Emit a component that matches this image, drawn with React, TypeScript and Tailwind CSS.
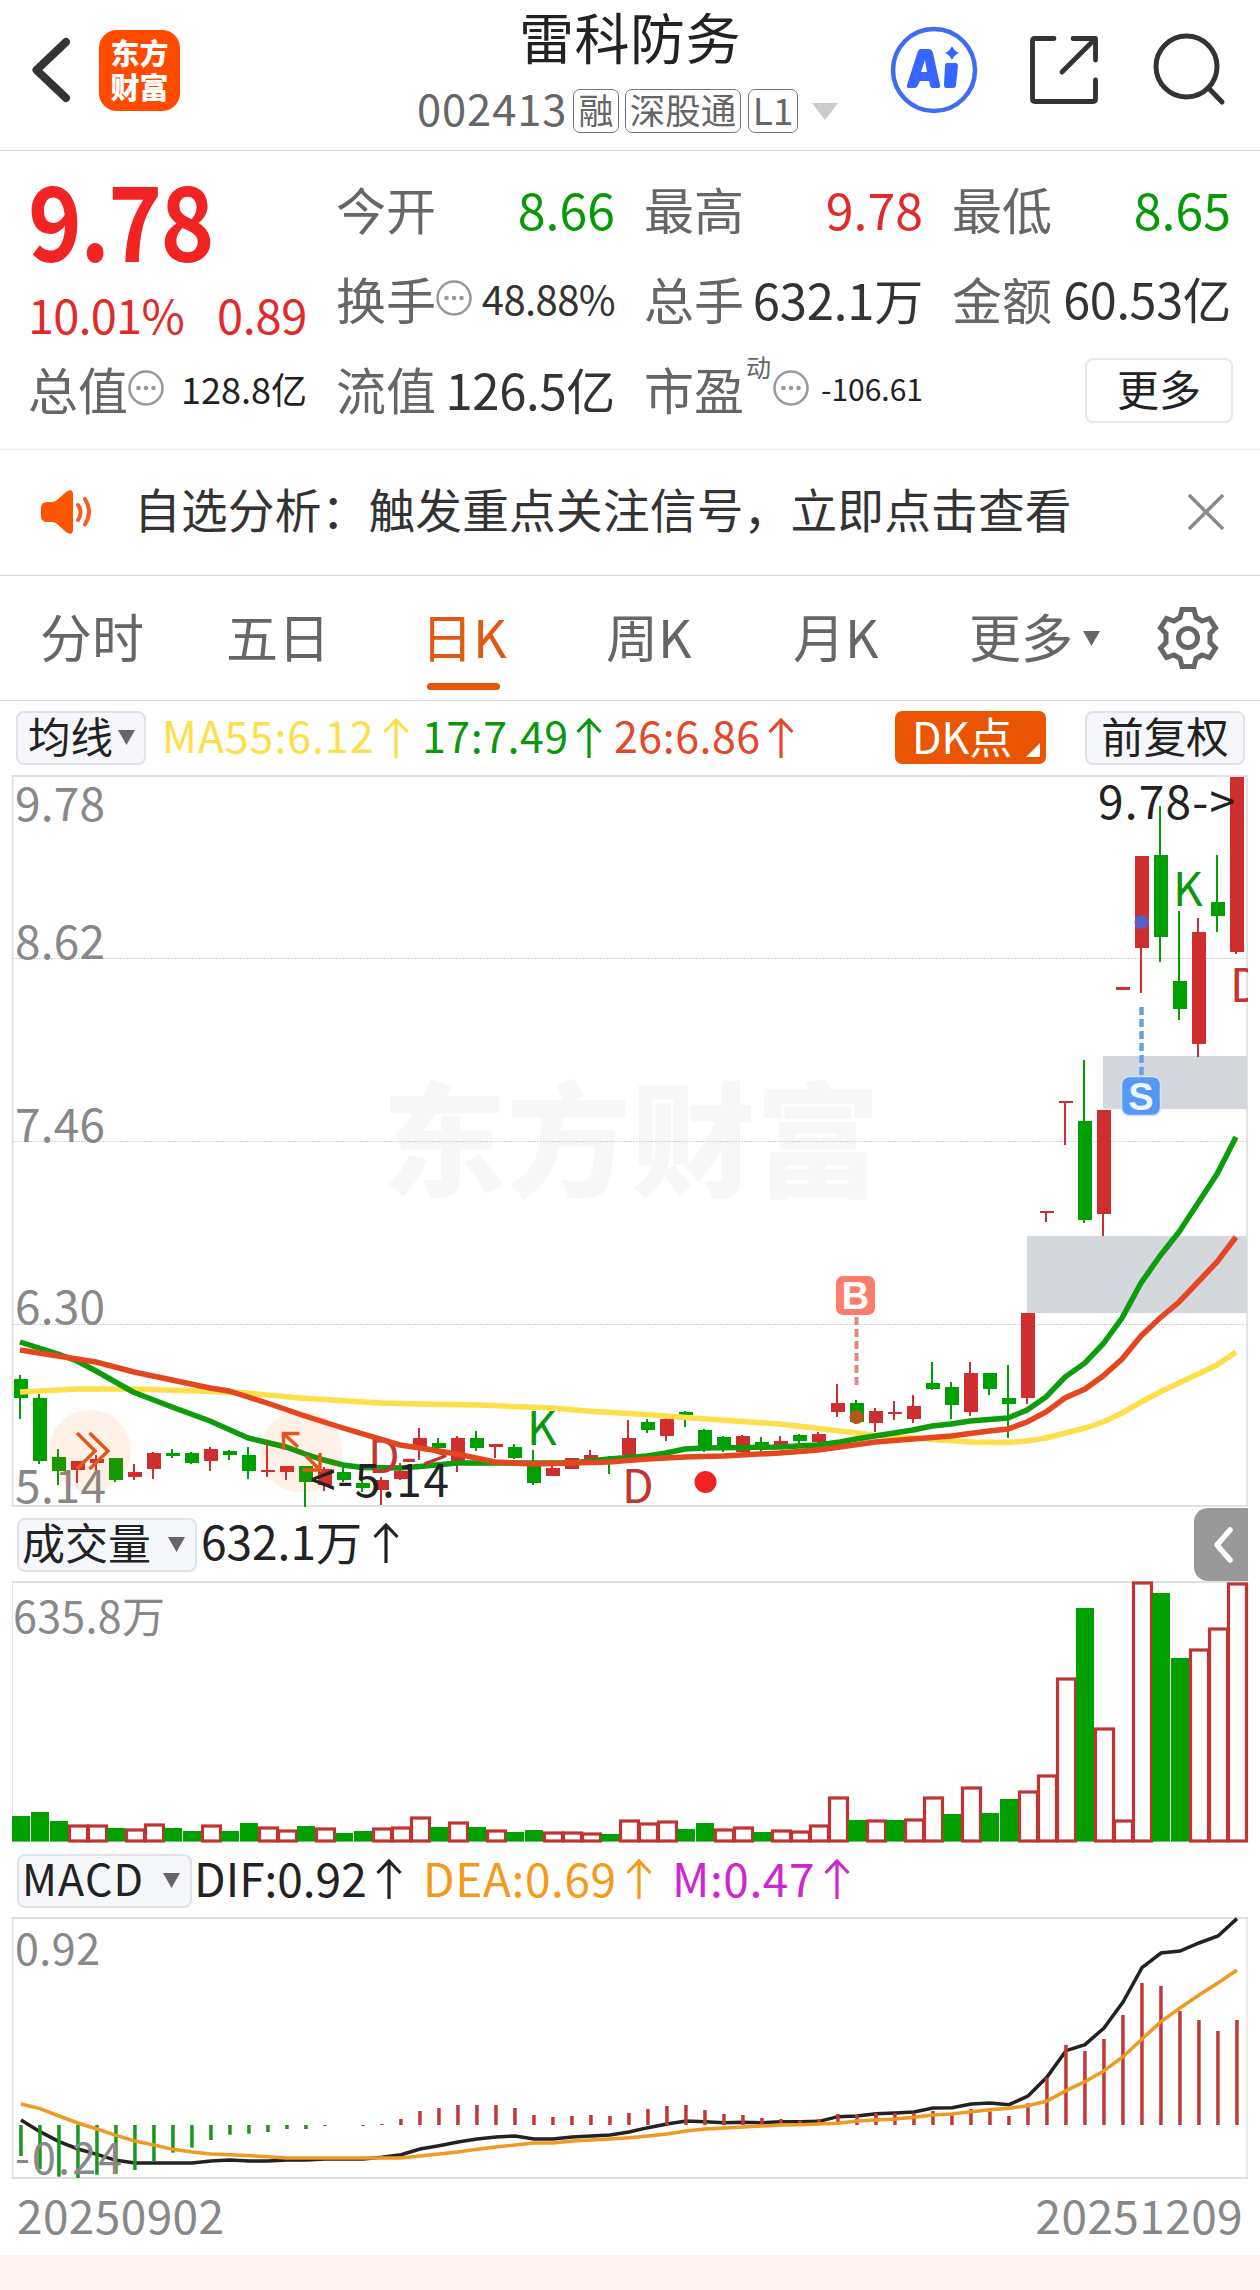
import React from "react";

const FONT = "font-['Noto_Sans_CJK_SC','Noto_Sans',sans-serif]";
const GREEN = "#00a000";
const RED = "#cf2e2e";

type Candle = [string, number, number, number, number];

// direction, wick top, body top, body bottom, wick bottom
const candles: Candle[] = [
  ["g", 1375, 1379, 1398, 1419], ["g", 1394, 1398, 1461, 1464], ["g", 1449, 1457, 1471, 1485],
  ["r", 1461, 1461, 1470, 1483], ["r", 1455, 1459, 1463, 1471], ["g", 1458, 1458, 1480, 1482],
  ["r", 1464, 1472, 1477, 1480], ["r", 1452, 1453, 1469, 1479], ["g", 1449, 1453, 1456, 1458],
  ["g", 1452, 1453, 1463, 1464], ["r", 1447, 1449, 1461, 1471], ["g", 1450, 1451, 1455, 1460],
  ["g", 1447, 1455, 1471, 1479], ["r", 1445, 1470, 1472, 1477], ["r", 1466, 1466, 1472, 1480],
  ["g", 1466, 1466, 1482, 1507], ["r", 1467, 1469, 1485, 1491], ["g", 1467, 1472, 1480, 1482],
  ["g", 1470, 1483, 1488, 1492], ["r", 1477, 1480, 1490, 1505], ["r", 1463, 1471, 1479, 1480],
  ["r", 1428, 1438, 1447, 1460], ["g", 1438, 1443, 1448, 1449], ["r", 1436, 1438, 1461, 1472],
  ["g", 1431, 1438, 1448, 1451], ["r", 1444, 1444, 1447, 1458], ["g", 1444, 1447, 1458, 1459],
  ["g", 1450, 1462, 1483, 1485], ["r", 1460, 1468, 1476, 1476], ["r", 1458, 1458, 1469, 1469],
  ["r", 1450, 1455, 1462, 1462], ["g", 1456, 1458, 1460, 1474], ["r", 1420, 1438, 1455, 1455],
  ["g", 1419, 1422, 1430, 1433], ["r", 1418, 1419, 1436, 1441], ["g", 1411, 1412, 1415, 1427],
  ["g", 1429, 1430, 1448, 1452], ["g", 1436, 1437, 1448, 1452], ["r", 1435, 1436, 1452, 1453],
  ["g", 1437, 1442, 1448, 1452], ["r", 1436, 1441, 1447, 1447], ["g", 1434, 1435, 1441, 1446],
  ["r", 1432, 1434, 1442, 1443], ["r", 1384, 1403, 1412, 1417], ["g", 1400, 1403, 1422, 1424],
  ["r", 1408, 1411, 1423, 1432], ["r", 1401, 1412, 1414, 1420], ["r", 1395, 1406, 1419, 1423],
  ["g", 1362, 1383, 1389, 1390], ["g", 1382, 1387, 1405, 1419], ["r", 1362, 1373, 1412, 1416],
  ["g", 1373, 1373, 1389, 1395], ["g", 1365, 1398, 1404, 1438], ["r", 1313, 1313, 1398, 1404],
  ["r", 1211, 1211, 1213, 1222], ["r", 1101, 1101, 1103, 1145], ["g", 1060, 1121, 1220, 1223],
  ["r", 1110, 1110, 1214, 1236], ["r", 987, 987, 990, 990], ["r", 856, 856, 948, 993],
  ["g", 806, 855, 937, 962], ["g", 911, 981, 1009, 1020], ["r", 918, 932, 1044, 1057],
  ["g", 855, 902, 916, 932], ["r", 777, 777, 952, 954],
];

const volumeTops = [
  1816, 1812, 1821, 1826, 1826, 1828, 1830, 1825, 1828, 1831, 1826, 1831, 1823, 1828, 1831, 1826, 1829,
  1833, 1831, 1829, 1828, 1818, 1827, 1823, 1827, 1831, 1832, 1830, 1833, 1833, 1834, 1834, 1821, 1824,
  1822, 1829, 1823, 1830, 1828, 1832, 1831, 1832, 1826, 1798, 1820, 1821, 1820, 1820, 1798, 1814, 1788,
  1813, 1799, 1792, 1776, 1679, 1608, 1729, 1821, 1583, 1593, 1658, 1650, 1629, 1584,
];

// days whose volume colour follows the previous close rather than the candle body
const volumeColour: Record<number, string> = { 33: "r", 37: "r", 41: "r", 46: "g", 48: "r", 63: "r" };

// MACD series, in thirds of a pixel from y = 1840
const macdBars = [
  948, 987, 1010, 1014, 1004, 1001, 990, 965, 938, 923, 900, 884, 881, 876, 867, 867, 858, 855, 858, 852, 837,
  813, 804, 795, 795, 795, 804, 825, 831, 828, 825, 828, 819, 807, 798, 795, 810, 822, 825, 834, 837, 842, 837,
  822, 825, 819, 819, 820, 813, 820, 807, 814, 828, 790, 713, 615, 633, 597, 525, 429, 438, 513, 540, 573, 540,
];
const dif = [
  840, 875, 905, 927, 943, 961, 969, 969, 969, 969, 963, 960, 963, 963, 960, 960, 957, 957, 957, 952, 944, 927,
  917, 906, 897, 891, 888, 897, 897, 891, 888, 885, 876, 863, 852, 843, 845, 848, 847, 848, 845, 845, 844, 830,
  828, 821, 819, 816, 804, 803, 792, 789, 794, 768, 711, 632, 614, 564, 486, 383, 339, 333, 309, 288, 236,
];
const dea = [
  792, 806, 828, 849, 867, 886, 903, 915, 928, 936, 942, 944, 947, 950, 954, 954, 954, 954, 954, 954, 954, 948,
  942, 936, 928, 921, 915, 909, 909, 903, 900, 897, 893, 888, 882, 873, 867, 864, 861, 858, 855, 854, 852, 850,
  843, 840, 837, 832, 825, 822, 815, 809, 805, 797, 783, 752, 725, 692, 650, 597, 545, 504, 465, 429, 390,
];

const MA55 =
  "20,1392 77,1389 133,1389 200,1391 247,1393 300,1398 380,1403 420,1404 480,1405 553,1408 587,1411 653,1415 720,1420 780,1424 840,1431 873,1435 940,1440 973,1442 1007,1442.5 1027,1441 1046,1438 1065,1433 1085,1428 1103,1422 1122,1413 1141,1402 1160,1392 1198,1374 1217,1365 1236,1352";
const MA17 =
  "20,1342 58,1354 77,1361 96,1371 133,1392 172,1407 210,1421 248,1438 286,1447 305,1454 324,1460 343,1465 362,1467.5 400,1468 420,1466.5 457,1463 495,1463 533,1463 571,1463 609,1459 647,1456 666,1453 685,1449 704,1448 780,1447 818,1445 840,1442 856,1439 875,1436 913,1430 932,1426 951,1424 970,1421 1008,1418 1027,1410 1046,1397 1065,1377 1085,1363 1103,1344 1122,1318 1141,1283 1160,1256 1179,1232 1198,1203 1217,1174 1236,1137";
const MA26 =
  "20,1350 96,1362 134,1372 172,1380 210,1388 229,1391 248,1397 267,1403 305,1416 343,1428 400,1445 420,1448 457,1454 495,1462 533,1464 571,1463 609,1462 647,1459 685,1457 723,1456 780,1453 818,1450 840,1447 875,1442 913,1439 951,1436 989,1431 1008,1429 1027,1422 1046,1412 1065,1398 1085,1389 1103,1376 1122,1359 1141,1336 1160,1318 1179,1302 1198,1282 1217,1262 1236,1237";

function UpArrow({ className = "" }: { className?: string }) {
  return (
    <svg className={`shrink-0 ${className}`} width="26" height="40" viewBox="0 0 26 40" fill="none" stroke="currentColor" strokeWidth="3.200">
      <path d="M13 40V2M1.500 14 13 2l11.500 12" />
    </svg>
  );
}

function Caret({ className = "" }: { className?: string }) {
  return (
    <svg className={`shrink-0 ${className}`} width="17" height="15" viewBox="0 0 17 15" fill="currentColor">
      <path d="M0 0h17L8.500 15z" />
    </svg>
  );
}

function InfoDots() {
  return (
    <svg className="-ml-[2px] shrink-0" width="36" height="36" viewBox="0 0 36 36">
      <circle cx="18" cy="18" r="16.500" fill="none" stroke="#999" strokeWidth="2.500" />
      <circle cx="10.500" cy="18" r="2.300" fill="#999" />
      <circle cx="18" cy="18" r="2.300" fill="#999" />
      <circle cx="25.500" cy="18" r="2.300" fill="#999" />
    </svg>
  );
}

function Label({ children }: { children: React.ReactNode }) {
  return <span className="-ml-[2px] w-[102px] shrink-0 text-[50px] text-[#666]">{children}</span>;
}

function Row({ children }: { children: React.ReactNode }) {
  return <div className="-mr-[1px] flex h-[90px] items-center whitespace-nowrap leading-none">{children}</div>;
}

function Header() {
  return (
    <header className="flex h-[151px] border-b border-[#d5d5d5] leading-none">
      <svg className="ml-[28px] mt-[34px] shrink-0" width="46" height="72" viewBox="0 0 46 72" fill="none" stroke="#333" strokeWidth="8" strokeLinecap="round" strokeLinejoin="round">
        <path d="M38 8 8.500 36 38 64" />
      </svg>
      <div className="ml-[25px] mt-[30px] flex h-[81px] w-[81px] shrink-0 flex-col items-center rounded-[18px] bg-[#ff4a00] pt-[5px] text-[29px] font-black leading-[34px] text-white">
        <span>东方</span>
        <span>财富</span>
      </div>
      <div className="ml-[204px] flex w-[494px] shrink-0 flex-col">
        <h1 className="ml-[135px] mt-[7px] text-[55px] leading-[56px] tracking-[0.500px] text-[#222]">雷科防务</h1>
        <div className="ml-[33px] mt-[26px] flex h-[44px] items-center whitespace-nowrap text-[#666]">
          <span className="-mt-[6px] w-[156px] text-[43.500px] tracking-[0.900px]">002413</span>
          <span className="flex h-[44px] w-[46px] justify-center rounded-[7px] border border-[#777] text-[35px] leading-[38px]">融</span>
          <span className="ml-[6px] flex h-[44px] w-[116px] justify-center rounded-[7px] border border-[#777] text-[35.500px] leading-[38px]">深股通</span>
          <span className="ml-[7px] flex h-[44px] w-[50px] justify-center rounded-[7px] border border-[#777] text-[37px] leading-[38px]">L1</span>
          <svg className="ml-[14px]" width="26" height="17" viewBox="0 0 26 17" fill="#ccc">
            <path d="M0 0h26L13 17z" />
          </svg>
        </div>
      </div>
      <svg className="ml-[12px] mt-[26px] shrink-0" width="88" height="88" viewBox="0 0 88 88">
        <circle cx="44" cy="44" r="41" fill="none" stroke="#3f6cf0" strokeWidth="4.500" />
        <path
          d="M31 23h7q4 0 5 4l7 32q1 3-2 3h-5q-3 0-3-3l-1-4h-9l-2 4q-1 3-4 3h-5q-3 0-2-3l10-31q1-5 4-5zM35 34l-4 12h6z"
          fill="#3765ff"
          fillRule="evenodd"
        />
        <path d="M57 37h8q3 0 3 3l-2 19q0 3-3 3h-7q-2 0-2-3l1-19q0-3 2-3zM62 20q2 5 7 7-5 2-7 7-2-5-7-7 5-2 7-7z" fill="#3765ff" />
      </svg>
      <svg className="ml-[50px] mt-[34px] shrink-0" width="72" height="72" viewBox="0 0 72 72" fill="none" stroke="#333" strokeWidth="4.800" strokeLinecap="round" strokeLinejoin="round">
        <path d="M26 4.500H7q-2.500 0-2.500 2.500v58q0 2.500 2.500 2.500h58q2.500 0 2.500-2.500V46M45 4.500h22.500V26M66 6 34 38" />
      </svg>
      <svg className="ml-[50px] mt-[30px] shrink-0" width="76" height="78" viewBox="0 0 76 78" fill="none" stroke="#333" strokeWidth="5" strokeLinecap="round">
        <circle cx="36.500" cy="36.500" r="30.500" />
        <path d="M58.500 58 72 72" />
      </svg>
    </header>
  );
}

function Quote() {
  return (
    <section className="grid h-[299px] grid-cols-4 gap-x-8 border-b border-[#eee] px-[30px] pt-[12px]">
      <div>
        <div className="flex h-[120px] items-center pb-[12px] text-[104px] font-bold leading-[108px] text-[#f12323]">
          <span className="-ml-[2px] origin-left scale-x-[0.88] tracking-[-2px]">9.78</span>
        </div>
        <div className="-mr-[1px] flex h-[60px] items-center justify-between whitespace-nowrap text-[47px] leading-none text-[#e02b2b]">
          <span className="-ml-[2px] tracking-[-0.800px]">10.01%</span>
          <span className="tracking-[-0.300px]">0.89</span>
        </div>
        <Row>
          <Label>总值</Label>
          <InfoDots />
          <span className="ml-auto text-[36px] text-[#222]">128.8亿</span>
        </Row>
      </div>
      <div>
        <Row>
          <Label>今开</Label>
          <span className="ml-auto text-[50px] text-[#069a06]">8.66</span>
        </Row>
        <Row>
          <Label>换手</Label>
          <InfoDots />
          <span className="ml-auto text-[40px] tracking-[-0.600px] text-[#333]">48.88%</span>
        </Row>
        <Row>
          <Label>流值</Label>
          <span className="ml-auto text-[49px] tracking-[-0.300px] text-[#333]">126.5亿</span>
        </Row>
      </div>
      <div>
        <Row>
          <Label>最高</Label>
          <span className="ml-auto text-[50px] text-[#e02b2b]">9.78</span>
        </Row>
        <Row>
          <Label>总手</Label>
          <span className="ml-auto text-[49px] tracking-[-0.200px] text-[#333]">632.1万</span>
        </Row>
        <Row>
          <Label>市盈</Label>
          <span className="mt-[11px] w-[29px] self-start text-[25px] text-[#666]">动</span>
          <InfoDots />
          <span className="ml-auto text-[30px] text-[#222]">-106.61</span>
        </Row>
      </div>
      <div>
        <Row>
          <Label>最低</Label>
          <span className="ml-auto text-[50px] text-[#069a06]">8.65</span>
        </Row>
        <Row>
          <Label>金额</Label>
          <span className="ml-auto text-[48.500px] tracking-[-0.300px] text-[#333]">60.53亿</span>
        </Row>
        <Row>
          <button className="ml-auto mt-[4px] h-[65px] w-[148px] translate-x-[2px] rounded-[8px] border-2 border-[#e8e8e8] pb-[4px] text-[42px] text-[#222]">更多</button>
        </Row>
      </div>
    </section>
  );
}

function Notice() {
  return (
    <section className="flex h-[126px] items-center border-b border-[#d8d8d8]">
      <svg className="-mt-[2px] ml-[40px] shrink-0" width="56" height="46" viewBox="0 0 56 46">
        <path d="M1 19q0-6 6-6h5q3 0 5-2L26 3q3-2.500 5.500-1.500Q33 2.500 33 5v36q0 2.500-1.500 3.500-2.500 1-5.500-1.500l-9-8q-2-2-5-2H7q-6 0-6-6z" fill="#ff5500" />
        <path d="M38 16q5 7 0 15M45 10q8 12.500 0 25.500" fill="none" stroke="#f4601c" strokeWidth="4" strokeLinecap="round" />
      </svg>
      <p className="-mt-[9px] ml-[38px] w-[1041px] whitespace-nowrap text-[46.700px] leading-none tracking-[0.200px] text-[#333]">自选分析：触发重点关注信号，立即点击查看</p>
      <svg className="-mt-[2px] ml-[13px] shrink-0" width="36" height="36" viewBox="0 0 36 36" stroke="#8a8a8a" strokeWidth="3.500">
        <path d="M1 1 35 35M35 1 1 35" />
      </svg>
    </section>
  );
}

function Tabs() {
  return (
    <nav className="flex h-[125px] items-center whitespace-nowrap border-b border-[#d8d8d8] text-[52px] leading-none text-[#666]">
      <span className="-mt-[4px] ml-[40px] w-[186px]">分时</span>
      <span className="-mt-[4px] w-[195px]">五日</span>
      <span className="relative -mt-[4px] w-[185px] text-[#e05a14]">
        日K
        <span className="absolute left-[6px] top-[73px] h-[7px] w-[73px] rounded-full bg-[#e85505]" />
      </span>
      <span className="-mt-[4px] w-[187px]">周K</span>
      <span className="-mt-[4px] w-[176px]">月K</span>
      <span className="-mt-[4px] w-[114px]">更多</span>
      <Caret />
      <svg className="ml-[56px] shrink-0" width="64" height="64" viewBox="0 0 64 64" fill="none" stroke="#666" strokeWidth="5">
        <path d="M26 3.500h12l2 8 6 3.500 7.500-2.500L59.500 22l-5.500 5.500v9l5.500 5.500-6 9.500L46 49l-6 3.500-2 8H26l-2-8-6-3.500-7.500 2.500L4.500 42l5.500-5.500v-9L4.500 22l6-9.500L18 15l6-3.500z" />
        <circle cx="32" cy="32" r="9.500" />
      </svg>
    </nav>
  );
}

const PILL = "flex shrink-0 items-center rounded-[8px] border-2 border-[#e0e2e7] bg-[#f6f7fa] text-[#222]";

function AverageBar() {
  return (
    <div className="flex h-[73px] items-center whitespace-nowrap text-[43px] leading-none">
      <button className={`${PILL} ml-[16px] h-[54px] w-[130px] pl-[10px]`}>
        <span className="-mt-[5px] w-[90px] text-left text-[42.500px]">均线</span>
        <Caret className="text-[#666]" />
      </button>
      <span className="-mt-[6px] ml-[16px] w-[221px] tracking-[0.900px] text-[#fbdf4b]">MA55:6.12</span>
      <UpArrow className="text-[#fbdf4b]" />
      <span className="-mt-[6px] ml-[13px] w-[154px] tracking-[0.500px] text-[#0b970b]">17:7.49</span>
      <UpArrow className="text-[#0b970b]" />
      <span className="-mt-[6px] ml-[12px] w-[154px] tracking-[0.500px] text-[#e2482a]">26:6.86</span>
      <UpArrow className="text-[#e2482a]" />
      <button className="relative ml-[101px] h-[53px] w-[151px] rounded-[7px] bg-[#ea5504] pl-[17px] pb-[5px] text-left text-white">
        DK点
        <svg className="absolute bottom-[7px] right-[6px]" width="14" height="14" viewBox="0 0 14 14" fill="#fff">
          <path d="M14 0v14H0z" />
        </svg>
      </button>
      <button className={`${PILL} ml-[39px] h-[54px] w-[160px] justify-center pb-[5px] text-[42.500px]`}>前复权</button>
    </div>
  );
}

function CandleChart() {
  return (
    <svg className="block shrink-0" width="1260" height="734" viewBox="0 774 1260 734" fontFamily="'Noto Sans CJK SC','Noto Sans',sans-serif" fontSize="46">
      <text x="382" y="1187" fontSize="124" fontWeight="900" fill="#f7f7f7" textLength="498">东方财富</text>
      <path d="M12.500 776V1506M1247 776V1506" stroke="#e3e3e3" strokeWidth="2" />
      <path d="M12 776H1248M12 1506H1248" stroke="#e0e0e0" strokeWidth="2" />
      <path d="M12 958.500H1247M12 1141.500H1247M12 1324.500H1247" stroke="#d2d2d2" strokeWidth="1" strokeDasharray="2 1" />
      <path d="M1027 1236H1247V1313H1027zM1103 1056H1247V1109H1103z" fill="#d4d7dc" />
      {candles.map(([dir, high, top, bottom, low], i) => (
        <g key={i} fill={dir === "g" ? GREEN : RED}>
          <rect x={14 + 19 * i} y={top} width="14" height={bottom - top} />
          <rect x={19 + 19 * i} y={high} width="2" height={low - high} />
        </g>
      ))}
      <g fill="#888">
        <text x="15" y="821" textLength="90">9.78</text>
        <text x="15" y="959" textLength="90">8.62</text>
        <text x="15" y="1142" textLength="90">7.46</text>
        <text x="15" y="1324" textLength="90">6.30</text>
        <text x="15" y="1503" textLength="91">5.14</text>
      </g>
      <g fill="none" strokeWidth="5.500">
        <polyline points={MA55} stroke="#fcdf4a" />
        <polyline points={MA17} stroke="#0c9c0c" />
      </g>
      <circle cx="856.500" cy="1417" r="7" fill="#b3581c" />
      <circle cx="1141.500" cy="922" r="7" fill="#5560c8" />
      <text x="368" y="1473" fill="#c23535">D</text>
      <text x="401" y="1473" fill="#c23535" textLength="47">-&gt;</text>
      <polyline points={MA26} fill="none" stroke="#e4471f" strokeWidth="5.500" />
      <text x="527" y="1445" fill="#0b970b">K</text>
      <text x="622" y="1503" fill="#c23535">D</text>
      <text x="1173" y="906" fill="#0b970b">K</text>
      <svg x="1225" y="950" width="23" height="70">
        <text x="5" y="52" fill="#c9302f">D</text>
      </svg>
      <circle cx="705.500" cy="1482" r="11" fill="#f02222" />
      <circle cx="90" cy="1451" r="41" fill="#ff5500" fillOpacity="0.09" />
      <circle cx="301.500" cy="1451.500" r="41" fill="#ff5500" fillOpacity="0.09" />
      <g fill="none" stroke="#e0591b" strokeWidth="3.500">
        <path d="M77 1433 95 1451 77 1469M89.500 1433 108 1451 89.500 1469" />
        <path d="M299.500 1433.500H283.500V1449.500M284 1434 298 1447M303 1470H320V1453M319 1469 306 1456" />
      </g>
      <text x="310" y="1497" fill="#222" textLength="139">&lt;-5.14</text>
      <text x="1098" y="819" fill="#222" textLength="137">9.78-&gt;</text>
      <path d="M856.500 1317V1386" stroke="#e8887a" strokeWidth="4" strokeDasharray="8 4" />
      <rect x="836" y="1276" width="39" height="39" rx="7" fill="#fb7e6c" />
      <text x="855.500" y="1309" textAnchor="middle" fontFamily="Liberation Sans, sans-serif" fontSize="38" fontWeight="700" fill="#fff">B</text>
      <path d="M1141.500 1007V1076" stroke="#69a0e4" strokeWidth="4.500" strokeDasharray="8 4" />
      <rect x="1121.500" y="1076.500" width="39" height="39" rx="8" fill="#5599f2" stroke="#cfe4ff" strokeWidth="1.500" />
      <text x="1141" y="1110" textAnchor="middle" fontFamily="Liberation Sans, sans-serif" fontSize="38" fontWeight="700" fill="#eef6ff">S</text>
    </svg>
  );
}

function VolumeBar() {
  return (
    <div className="flex h-[73px] items-center whitespace-nowrap leading-none text-[#222]">
      <button className={`${PILL} ml-[17px] h-[54px] w-[180px] pl-[3px]`}>
        <span className="-mt-[6px] w-[146px] text-left text-[43px]">成交量</span>
        <Caret className="text-[#666]" />
      </button>
      <span className="-mt-[9px] ml-[4px] w-[172px] text-[46px]">632.1万</span>
      <UpArrow className="-mt-[4px]" />
      <button className="ml-auto mr-[12px] flex h-[73px] w-[54px] items-center justify-center rounded-l-[14px] bg-[#999]">
        <svg className="ml-[3px]" width="24" height="40" viewBox="0 0 24 40" fill="none" stroke="#fff" strokeWidth="5.500" strokeLinecap="round" strokeLinejoin="round">
          <path d="M19 5 6 20l13 15" />
        </svg>
      </button>
    </div>
  );
}

function VolumeChart() {
  return (
    <svg className="block shrink-0" width="1260" height="263" viewBox="0 1581 1260 263" fontFamily="'Noto Sans CJK SC','Noto Sans',sans-serif">
      <path d="M12.500 1582V1841M1247 1582V1841" stroke="#e3e3e3" />
      <path d="M12 1582H1248M12 1841H1248" stroke="#e0e0e0" strokeWidth="2" />
      {volumeTops.map((top, i) =>
        (volumeColour[i] ?? candles[i][0]) === "g" ? (
          <rect key={i} x={12 + 19 * i} y={top} width="18" height={1841.5 - top} fill={GREEN} />
        ) : (
          <rect key={i} x={12.5 + 19 * i} y={top} width="18" height={1841 - top} fill="#fff" stroke="#c03434" strokeWidth="3.200" />
        ),
      )}
      <text x="13" y="1633" fontSize="43" fill="#888" textLength="152">635.8万</text>
    </svg>
  );
}

function MacdBar() {
  return (
    <div className="flex h-[73px] items-center whitespace-nowrap text-[46px] leading-none text-[#222]">
      <button className={`${PILL} ml-[17px] h-[54px] w-[175px] pl-[3px]`}>
        <span className="-mt-[6px] w-[141px] text-left text-[43px] tracking-[1.200px]">MACD</span>
        <Caret className="text-[#666]" />
      </button>
      <span className="-mt-[8px] ml-[2px] w-[182px]">DIF:0.92</span>
      <UpArrow className="-mt-[3px]" />
      <span className="-mt-[8px] ml-[21px] w-[203px] tracking-[0.600px] text-[#f39a1b]">DEA:0.69</span>
      <UpArrow className="-mt-[3px] text-[#f39a1b]" />
      <span className="-mt-[8px] ml-[20px] w-[152px] tracking-[0.600px] text-[#cd28cd]">M:0.47</span>
      <UpArrow className="-mt-[3px] text-[#cd28cd]" />
    </div>
  );
}

function MacdChart() {
  const line = (values: number[]) => values.map((v, i) => `${21 + 19 * i},${1840 + v / 3}`).join(" ");
  return (
    <svg className="block shrink-0" width="1260" height="263" viewBox="0 1917 1260 263" fontFamily="'Noto Sans CJK SC','Noto Sans',sans-serif" fontSize="43">
      <path d="M12.500 1918V2178M1247 1918V2178" stroke="#e3e3e3" strokeWidth="1.500" />
      <path d="M12 1918H1248M12 2178H1248" stroke="#e0e0e0" strokeWidth="2" />
      <polyline points={line(dif)} fill="none" stroke="#222" strokeWidth="3.500" />
      {macdBars.map((v, i) => (
        <rect
          key={i}
          x={19.2 + 19 * i}
          y={Math.min(2125, 1840 + v / 3)}
          width="3.500"
          height={Math.abs(v / 3 - 285)}
          fill={v > 855 ? "#1b971b" : "#bf3a36"}
        />
      ))}
      <polyline points={line(dea)} fill="none" stroke="#ef9a22" strokeWidth="3.500" />
      <g fill="#888">
        <text x="15" y="1965" textLength="85">0.92</text>
        <text x="15" y="2174" textLength="107">-0.24</text>
      </g>
    </svg>
  );
}

export default function App() {
  return (
    <main className={`flex h-[2290px] w-[1260px] flex-col overflow-hidden bg-white ${FONT}`}>
      <Header />
      <Quote />
      <Notice />
      <Tabs />
      <AverageBar />
      <CandleChart />
      <VolumeBar />
      <VolumeChart />
      <MacdBar />
      <MacdChart />
      <footer className="flex h-[75px] items-center justify-between px-[17px] pb-[8px] text-[46px] leading-none tracking-[0.400px] text-[#888]">
        <span>20250902</span>
        <span>20251209</span>
      </footer>
      <div className="grow bg-[#fff3ef]" />
    </main>
  );
}
